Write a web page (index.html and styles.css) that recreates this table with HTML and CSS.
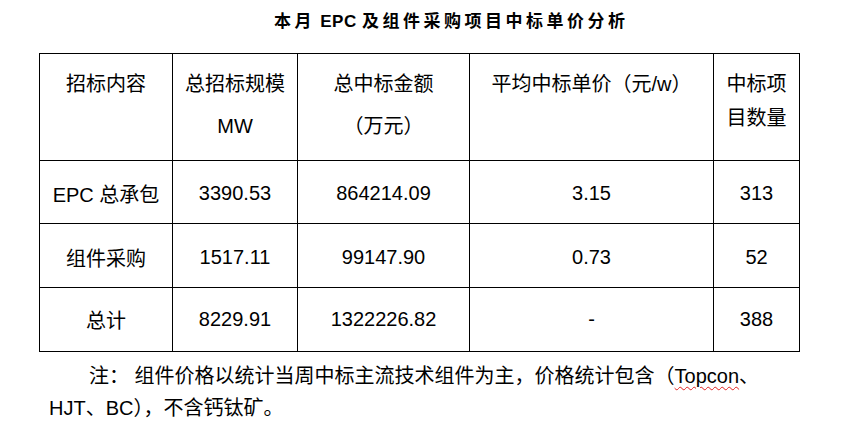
FILE: index.html
```html
<!DOCTYPE html>
<html lang="zh-CN">
<head>
    <meta charset="UTF-8">
    <meta name="viewport" content="width=device-width, initial-scale=1.0">
    <title>本月 EPC 及组件采购项目中标单价分析</title>
    <link rel="stylesheet" href="styles.css">
</head>
<body>

<h1 class="title"><span class="title-cn">本月</span> EPC <span class="title-cn">及组件采购项目中标单价分析</span></h1>

<table class="report">
    <colgroup>
        <col class="c-item">
        <col class="c-scale">
        <col class="c-amount">
        <col class="c-price">
        <col class="c-count">
    </colgroup>
    <thead>
        <tr class="head-row">
            <th class="head">招标内容</th>
            <th class="head">总招标规模<br>MW</th>
            <th class="head">总中标金额<br>（万元）</th>
            <th class="head">平均中标单价（元/w）</th>
            <th class="head head-tight">中标项目数量</th>
        </tr>
    </thead>
    <tbody>
        <tr class="row-a">
            <td>EPC 总承包</td>
            <td>3390.53</td>
            <td>864214.09</td>
            <td>3.15</td>
            <td>313</td>
        </tr>
        <tr class="row-b">
            <td>组件采购</td>
            <td>1517.11</td>
            <td>99147.90</td>
            <td>0.73</td>
            <td>52</td>
        </tr>
        <tr class="row-b row-total">
            <td>总计</td>
            <td>8229.91</td>
            <td>1322226.82</td>
            <td>-</td>
            <td>388</td>
        </tr>
    </tbody>
</table>

<p class="note">注： 组件价格以统计当周中标主流技术组件为主，价格统计包含（<span class="spell">Topcon</span>、<br>HJT、BC），不含钙钛矿。</p>

</body>
</html>
```

FILE: styles.css
```css
body {
    margin: 0;
    background: #fff;
    color: #000;
    font-family: "Liberation Sans", "Noto Sans CJK SC", sans-serif;
}
.title {
    margin: 0;
    padding: 0 0 9px 274px;
    font-size: 17px;
    font-weight: bold;
    line-height: 44px;
    letter-spacing: 0.5px;
}
.title-cn {
    letter-spacing: 3.5px;
}
.report {
    margin-left: 39px;
    width: 760px;
    table-layout: fixed;
    border-collapse: collapse;
    font-size: 20px;
}
.c-item { width: 133px; }
.c-scale { width: 125px; }
.c-amount { width: 172px; }
.c-price { width: 244px; }
.c-count { width: 86px; }
.report th, .report td {
    border: 1px solid #000;
    padding: 0 6px;
    text-align: center;
    font-weight: normal;
}
.head-row {
    height: 107px;
}
.report .head {
    vertical-align: top;
    padding-top: 9px;
    line-height: 42px;
}
.report .head-tight {
    padding-top: 13px;
    line-height: 34px;
}
.row-a {
    height: 63px;
}
.row-b {
    height: 64px;
}
.report td {
    vertical-align: middle;
    padding-top: 3px;
}
.report .row-total td {
    padding-top: 0;
}
.note {
    margin: 8px 0 0;
    padding-left: 49px;
    text-indent: 40px;
    font-size: 20px;
    line-height: 32px;
}
.spell {
    text-decoration: underline wavy #e02020;
    text-decoration-thickness: 1px;
    text-underline-offset: 3px;
}
```
